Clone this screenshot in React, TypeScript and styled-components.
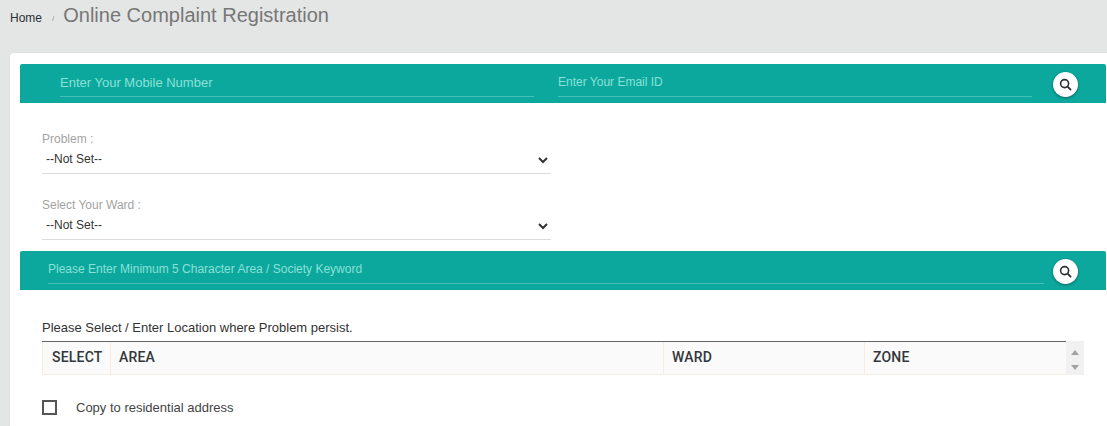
import styled, { createGlobalStyle } from 'styled-components'

const GlobalStyle = createGlobalStyle`
  html, body {
    margin: 0;
    padding: 0;
    height: 426px;
    overflow: hidden;
    background: #e4e5e5;
    font-family: 'Liberation Sans', Arial, sans-serif;
  }
`

function SearchIcon() {
  return (
    <svg width='13' height='13' viewBox='0 0 13 13' fill='none' aria-hidden='true'>
      <circle cx='5.6' cy='5.6' r='4' stroke='#2b2f33' strokeWidth='1.6' />
      <path d='M8.6 8.6L11.6 11.6' stroke='#2b2f33' strokeWidth='1.8' strokeLinecap='round' />
    </svg>
  )
}

export default function App() {
  return (
    <>
      <GlobalStyle />
      <Breadcrumb>
        <HomeLink href='#'>Home</HomeLink>
        <Slash>/</Slash>
        <Title>Online Complaint Registration</Title>
      </Breadcrumb>
      <Card>
        <TealBar>
          <MobileInput placeholder='Enter Your Mobile Number' />
          <EmailInput placeholder='Enter Your Email ID' />
          <SearchButton type='button' aria-label='Search'>
            <SearchIcon />
          </SearchButton>
        </TealBar>
        <Fields>
          <Field>
            <FieldLabel>Problem :</FieldLabel>
            <FieldSelect>
              <option>--Not Set--</option>
            </FieldSelect>
          </Field>
          <Field>
            <FieldLabel>Select Your Ward :</FieldLabel>
            <FieldSelect>
              <option>--Not Set--</option>
            </FieldSelect>
          </Field>
        </Fields>
        <KeywordBar>
          <KeywordInput placeholder='Please Enter Minimum 5 Character Area / Society Keyword' />
          <KeywordButton type='button' aria-label='Search'>
            <SearchIcon />
          </KeywordButton>
        </KeywordBar>
        <LocationSection>
          <LocationText>Please Select / Enter Location where Problem persist.</LocationText>
          <TableRow>
            <HeaderGrid>
              <HeaderCell>SELECT</HeaderCell>
              <HeaderCell>AREA</HeaderCell>
              <HeaderCell>WARD</HeaderCell>
              <HeaderCell>ZONE</HeaderCell>
            </HeaderGrid>
            <ScrollTrack>
              <ArrowUp />
              <ArrowDown />
            </ScrollTrack>
          </TableRow>
          <CopyRow>
            <CopyBox type='checkbox' />
            Copy to residential address
          </CopyRow>
        </LocationSection>
      </Card>
    </>
  )
}

const Breadcrumb = styled.div`
  height: 53px;
  box-sizing: border-box;
  padding: 3px 0 0 10px;
  display: flex;
  align-items: flex-start;
`

const HomeLink = styled.a`
  margin-top: 8px;
  font-size: 12px;
  line-height: 14px;
  color: #2c3036;
  text-decoration: none;
`

const Slash = styled.span`
  margin: 10px 9px 0 10px;
  font-size: 8px;
  line-height: 12px;
  color: #999;
`

const Title = styled.h1`
  margin: 0;
  font-size: 20px;
  line-height: 24px;
  font-weight: 400;
  color: #777;
`

const Card = styled.main`
  height: 373px;
  margin-left: 10px;
  box-sizing: border-box;
  padding: 11px 0 0 10px;
  background: #fff;
  border-radius: 3px 0 0 0;
  box-shadow: 0 0 1px rgba(0, 0, 0, 0.2);
`

const TealBar = styled.div`
  height: 39px;
  margin-right: 1px;
  box-sizing: border-box;
  background: #0ca89e;
  border-radius: 2px 2px 0 0;
  display: flex;
  align-items: flex-start;
  padding-left: 40px;
`

const KeywordBar = styled(TealBar)`
  padding-left: 28px;
`

const BarInput = styled.input`
  display: block;
  box-sizing: border-box;
  height: 33px;
  padding: 4px 0 0;
  border: 0;
  border-bottom: 1px solid #45c0b6;
  border-radius: 0;
  outline: 0;
  background: transparent;
  color: #fff;
  font-family: inherit;
  font-size: 12px;

  &::placeholder {
    color: #8ae0d6;
    opacity: 1;
  }
`

const MobileInput = styled(BarInput)`
  width: 474px;
  font-size: 13px;
`

const EmailInput = styled(BarInput)`
  width: 474px;
  margin-left: 24px;
`

const KeywordInput = styled(BarInput)`
  width: 996px;
`

const SearchButton = styled.button`
  width: 25px;
  height: 25px;
  margin: 8px 0 0 21px;
  padding: 0;
  border: 0;
  border-radius: 50%;
  background: #fff;
  box-shadow: 0 1px 3px rgba(0, 0, 0, 0.4);
  display: flex;
  align-items: center;
  justify-content: center;
`

const KeywordButton = styled(SearchButton)`
  margin-left: 9px;
`

const Fields = styled.div`
  width: 509px;
  margin-left: 22px;
  padding: 29px 0 11px;
  display: flex;
  flex-direction: column;
  gap: 24px;
`

const Field = styled.div`
  display: flex;
  flex-direction: column;
`

const FieldLabel = styled.label`
  font-size: 12px;
  line-height: 14px;
  color: #a3a3a3;
`

const FieldSelect = styled.select`
  display: block;
  box-sizing: border-box;
  width: 100%;
  height: 28px;
  margin-top: 0;
  padding: 0 0 2px;
  border: 0;
  border-bottom: 1px solid #dcdcdc;
  border-radius: 0;
  outline: 0;
  background: #fff;
  color: #333;
  font-family: inherit;
  font-size: 12px;
`

const LocationSection = styled.section`
  margin-left: 22px;
`

const LocationText = styled.p`
  margin: 0;
  padding-top: 31px;
  font-size: 13px;
  line-height: 14px;
  color: #333;
`

const TableRow = styled.div`
  display: flex;
  width: 1042px;
  height: 34px;
  margin-top: 6px;
`

const HeaderGrid = styled.div`
  flex: 1;
  display: grid;
  grid-template-columns: 68px 553px 201px 1fr;
  background: #fafafa;
  border-top: 1px solid #666;
  border-bottom: 1px solid #f6ecdf;
`

const HeaderCell = styled.div`
  padding-left: 8px;
  border-left: 1px solid #f6ecdf;
  font-family: 'Roboto', sans-serif;
  font-size: 14px;
  font-weight: 500;
  letter-spacing: 0.2px;
  line-height: 31px;
  color: #33373b;

  &:first-child {
    padding-left: 9px;
  }
`

const ScrollTrack = styled.div`
  width: 18px;
  background: #f1f1f1;
  display: flex;
  flex-direction: column;
  align-items: center;
  gap: 10px;
  padding-top: 9px;
  box-sizing: border-box;
`

const ArrowUp = styled.span`
  width: 0;
  height: 0;
  border-left: 4px solid transparent;
  border-right: 4px solid transparent;
  border-bottom: 5px solid #a3a3a3;
`

const ArrowDown = styled.span`
  width: 0;
  height: 0;
  border-left: 4px solid transparent;
  border-right: 4px solid transparent;
  border-top: 5px solid #a3a3a3;
`

const CopyRow = styled.label`
  display: flex;
  align-items: center;
  margin-top: 25px;
  font-size: 13px;
  line-height: 14px;
  color: #444;
`

const CopyBox = styled.input`
  appearance: none;
  width: 15px;
  height: 15px;
  margin: 0 19px 0 0;
  box-sizing: border-box;
  border: 2px solid #555;
  background: #fff;
`
